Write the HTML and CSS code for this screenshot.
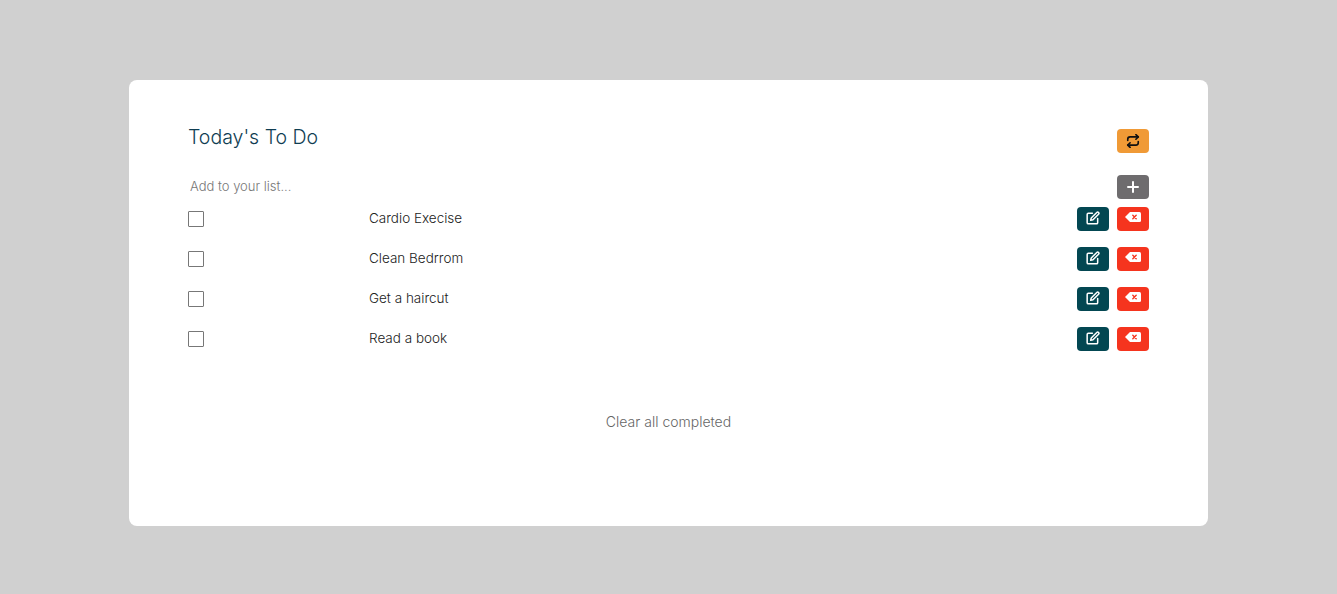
FILE: index.html
```html
<!DOCTYPE html>
<html lang="en">
<head>
  <meta charset="UTF-8" />
  <title>Today's To Do</title>
  <link rel="stylesheet" href="styles.css">
</head>
<body>
  <div class="card">
    <div class="header">
      <h1>Today's To Do</h1>
      <button class="btn btn-orange" type="button">
        <svg class="icon" viewBox="0 0 24 24"><path d="M17 1l4 4-4 4"/><path d="M3 11V9a4 4 0 0 1 4-4h14"/><path d="M7 23l-4-4 4-4"/><path d="M21 13v2a4 4 0 0 1-4 4H3"/></svg>
      </button>
    </div>

    <div class="add-row">
      <input type="text" placeholder="Add to your list..." />
      <button class="btn btn-grey" type="button">
        <svg class="icon icon-plus" viewBox="0 0 12 12"><path d="M6 1v10M1 6h10"/></svg>
      </button>
    </div>

    <div class="todo">
      <input type="checkbox" />
      <span class="todo-text">Cardio Execise</span>
      <button class="btn btn-teal" type="button">
        <svg class="icon icon-edit" viewBox="0 0 24 24"><path d="M11 4H4a2 2 0 0 0-2 2v14a2 2 0 0 0 2 2h14a2 2 0 0 0 2-2v-7"/><path d="M18.5 2.5a2.121 2.121 0 0 1 3 3L12 15l-4 1 1-4 9.5-9.5z"/></svg>
      </button>
      <button class="btn btn-red" type="button">
        <svg class="icon-del" viewBox="0 0 16 10"><path class="del-shape" d="M5 0h9.5A1.5 1.5 0 0 1 16 1.500v7A1.500 1.500 0 0 1 14.500 10H5L0 5z"/><path class="del-x" d="M7.800 3.300l3.400 3.400M11.200 3.300l-3.400 3.400"/></svg>
      </button>
    </div>

    <div class="todo">
      <input type="checkbox" />
      <span class="todo-text">Clean Bedrrom</span>
      <button class="btn btn-teal" type="button">
        <svg class="icon icon-edit" viewBox="0 0 24 24"><path d="M11 4H4a2 2 0 0 0-2 2v14a2 2 0 0 0 2 2h14a2 2 0 0 0 2-2v-7"/><path d="M18.5 2.5a2.121 2.121 0 0 1 3 3L12 15l-4 1 1-4 9.5-9.5z"/></svg>
      </button>
      <button class="btn btn-red" type="button">
        <svg class="icon-del" viewBox="0 0 16 10"><path class="del-shape" d="M5 0h9.5A1.5 1.5 0 0 1 16 1.500v7A1.500 1.500 0 0 1 14.500 10H5L0 5z"/><path class="del-x" d="M7.800 3.300l3.400 3.400M11.200 3.300l-3.400 3.400"/></svg>
      </button>
    </div>

    <div class="todo">
      <input type="checkbox" />
      <span class="todo-text">Get a haircut</span>
      <button class="btn btn-teal" type="button">
        <svg class="icon icon-edit" viewBox="0 0 24 24"><path d="M11 4H4a2 2 0 0 0-2 2v14a2 2 0 0 0 2 2h14a2 2 0 0 0 2-2v-7"/><path d="M18.5 2.5a2.121 2.121 0 0 1 3 3L12 15l-4 1 1-4 9.5-9.5z"/></svg>
      </button>
      <button class="btn btn-red" type="button">
        <svg class="icon-del" viewBox="0 0 16 10"><path class="del-shape" d="M5 0h9.5A1.5 1.5 0 0 1 16 1.500v7A1.500 1.500 0 0 1 14.500 10H5L0 5z"/><path class="del-x" d="M7.800 3.300l3.400 3.400M11.200 3.300l-3.400 3.400"/></svg>
      </button>
    </div>

    <div class="todo">
      <input type="checkbox" />
      <span class="todo-text">Read a book</span>
      <button class="btn btn-teal" type="button">
        <svg class="icon icon-edit" viewBox="0 0 24 24"><path d="M11 4H4a2 2 0 0 0-2 2v14a2 2 0 0 0 2 2h14a2 2 0 0 0 2-2v-7"/><path d="M18.5 2.5a2.121 2.121 0 0 1 3 3L12 15l-4 1 1-4 9.5-9.5z"/></svg>
      </button>
      <button class="btn btn-red" type="button">
        <svg class="icon-del" viewBox="0 0 16 10"><path class="del-shape" d="M5 0h9.5A1.5 1.5 0 0 1 16 1.500v7A1.500 1.500 0 0 1 14.500 10H5L0 5z"/><path class="del-x" d="M7.800 3.300l3.400 3.400M11.200 3.300l-3.400 3.400"/></svg>
      </button>
    </div>

    <div class="clear">Clear all completed</div>
  </div>
</body>
</html>
```

FILE: styles.css
```css
body {
  margin: 0;
  height: 594px;
  background: #d0d0d0;
  font-family: 'Inter', sans-serif;
  font-weight: 300;
  overflow: hidden;
}

.card {
  width: 961px;
  height: 402px;
  margin: 80px 0 0 129px;
  padding: 44px 59px 0;
  background: #ffffff;
  border-radius: 8px;
}

.header {
  display: flex;
  justify-content: space-between;
  align-items: flex-start;
  height: 29px;
  margin-bottom: 22px;
}

h1 {
  margin: 0;
  font-size: 19.500px;
  line-height: 27px;
  font-weight: 300;
  color: #0f3d52;
}

.header .btn {
  margin-top: 5px;
}

.add-row {
  display: flex;
  justify-content: space-between;
  align-items: center;
  height: 24px;
  margin-bottom: 8px;
}

.add-row input {
  flex: 1;
  border: none;
  outline: none;
  padding: 0 2px 2px;
  font-family: inherit;
  font-weight: 300;
  font-size: 13px;
}

.add-row input::placeholder {
  color: #777;
}

.todo {
  display: flex;
  align-items: center;
  gap: 8px;
  height: 24px;
  margin-bottom: 16px;
}

.todo input {
  appearance: none;
  width: 16px;
  height: 16px;
  margin: 0 157px 0 0;
  border: 1px solid #777;
  border-radius: 1px;
  background: #fff;
  flex-shrink: 0;
}

.todo-text {
  flex: 1;
  padding-bottom: 2px;
  font-size: 13.500px;
  color: #222;
}

.btn {
  display: flex;
  align-items: center;
  justify-content: center;
  width: 32px;
  height: 24px;
  padding: 0;
  border: none;
  border-radius: 4px;
}

.btn-orange { background: #f09a36; }
.btn-grey { background: #6e6c6e; }
.btn-teal { background: #034752; }
.btn-red { background: #f5341e; }

.icon {
  width: 14px;
  height: 14px;
  fill: none;
  stroke: #111;
  stroke-width: 2.800;
  stroke-linecap: round;
  stroke-linejoin: round;
}

.icon-plus {
  width: 12px;
  height: 12px;
  stroke: #fff;
  stroke-width: 2;
}

.icon-edit {
  margin-top: -3px;
  stroke: #fff;
  stroke-width: 2.600;
}

.icon-del {
  width: 16px;
  height: 10px;
  margin-top: -4px;
}

.del-shape {
  fill: #fff;
}

.del-x {
  fill: none;
  stroke: #f5341e;
  stroke-width: 1.400;
  stroke-linecap: round;
}

.clear {
  margin-top: 62px;
  text-align: center;
  font-size: 14px;
  line-height: 18px;
  color: #666;
}
```
